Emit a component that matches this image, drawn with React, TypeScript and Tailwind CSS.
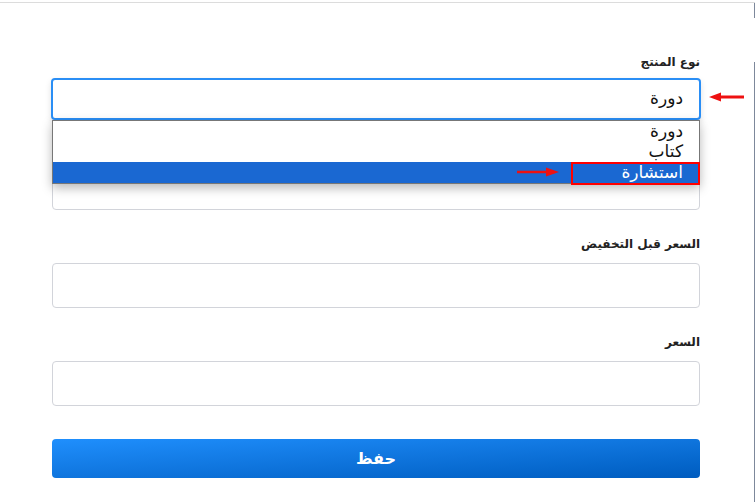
const font = { fontFamily: '"DejaVu Sans", "Noto Sans", sans-serif' };

function LeftArrow() {
  return (
    <svg width="35" height="10" viewBox="0 0 35 10" className="block">
      <line x1="10" y1="5" x2="35" y2="5" stroke="#ee1111" strokeWidth="3" />
      <polygon points="0,5 12,0.5 12,9.5" fill="#ee1111" />
    </svg>
  );
}

function RightArrow() {
  return (
    <svg width="42" height="10" viewBox="0 0 42 10" className="block">
      <line x1="0" y1="5" x2="30" y2="5" stroke="#ee1111" strokeWidth="2.5" />
      <polygon points="42,5 29,0.5 29,9.5" fill="#ee1111" />
    </svg>
  );
}

function Field({ label }: { label: string }) {
  return (
    <div className="flex flex-col">
      <label className="flex h-[20px] items-center text-[12px] font-bold text-[#222]">
        {label}
      </label>
      <input
        type="text"
        className="mt-[9px] h-[45px] w-full rounded-[4px] border border-[#d2d4da] bg-white px-3"
      />
    </div>
  );
}

export default function App() {
  return (
    <div className="h-[502px] w-[755px] overflow-hidden bg-white" style={font}>
      <div className="mt-[2px] flex h-[500px] border-t border-[#dcdcdc]">
        <main dir="rtl" className="flex-1 pl-[52px] pr-[54px] pt-[49px]">
          {/* product type select, shown open */}
          <div className="flex flex-col">
            <label className="flex h-[20px] items-center text-[12px] font-bold text-[#222]">
              نوع المنتج
            </label>
            <div className="relative mt-[6px] -mx-px">
              <div className="flex h-[42px] items-center rounded-[4px] border-2 border-[#2a8ef5] bg-white pr-[16px] text-[17px] text-[#111] shadow-[0_3px_6px_rgba(0,0,0,0.12)]">
                دورة
              </div>
              <div className="absolute right-[-43px] top-[14px]" dir="ltr">
                <LeftArrow />
              </div>
              <ul className="absolute left-px right-px top-[42px] z-10 border border-[#777] bg-white text-[17px] shadow-[0_4px_10px_rgba(0,0,0,0.28)]">
                <li className="flex h-[20px] items-center overflow-hidden pr-[16px] leading-[20px] text-[#111]">دورة</li>
                <li className="flex h-[21px] items-center overflow-hidden pr-[16px] leading-[21px] text-[#111]">كتاب</li>
                <li className="relative flex h-[21px] items-center bg-[#1a68d2] pr-[16px] leading-[21px] text-white">
                  استشارة
                  <span className="absolute right-[-1px] top-[0px] h-[23px] w-[129px] border-[2.5px] border-[#ff0000]" />
                  <span className="absolute right-[140px] top-[5px]" dir="ltr">
                    <RightArrow />
                  </span>
                </li>
              </ul>
            </div>
          </div>

          <div className="mt-[16px] flex flex-col gap-[24px]">
            <Field label="الوصف" />
            <Field label="السعر قبل التخفيض" />
            <Field label="السعر" />
          </div>

          <button
            type="button"
            className="mt-[33px] flex h-[39px] w-full items-center justify-center rounded-[4px] bg-gradient-to-br from-[#1f8ffd] to-[#005cbf] text-[16px] font-bold text-white"
          >
            حفظ
          </button>
        </main>
        <div className="flex w-px flex-col">
          <div className="h-[15px] bg-[#7d889b]" />
          <div className="mt-[44px] flex-1 bg-[#7d889b]" />
        </div>
      </div>
    </div>
  );
}
